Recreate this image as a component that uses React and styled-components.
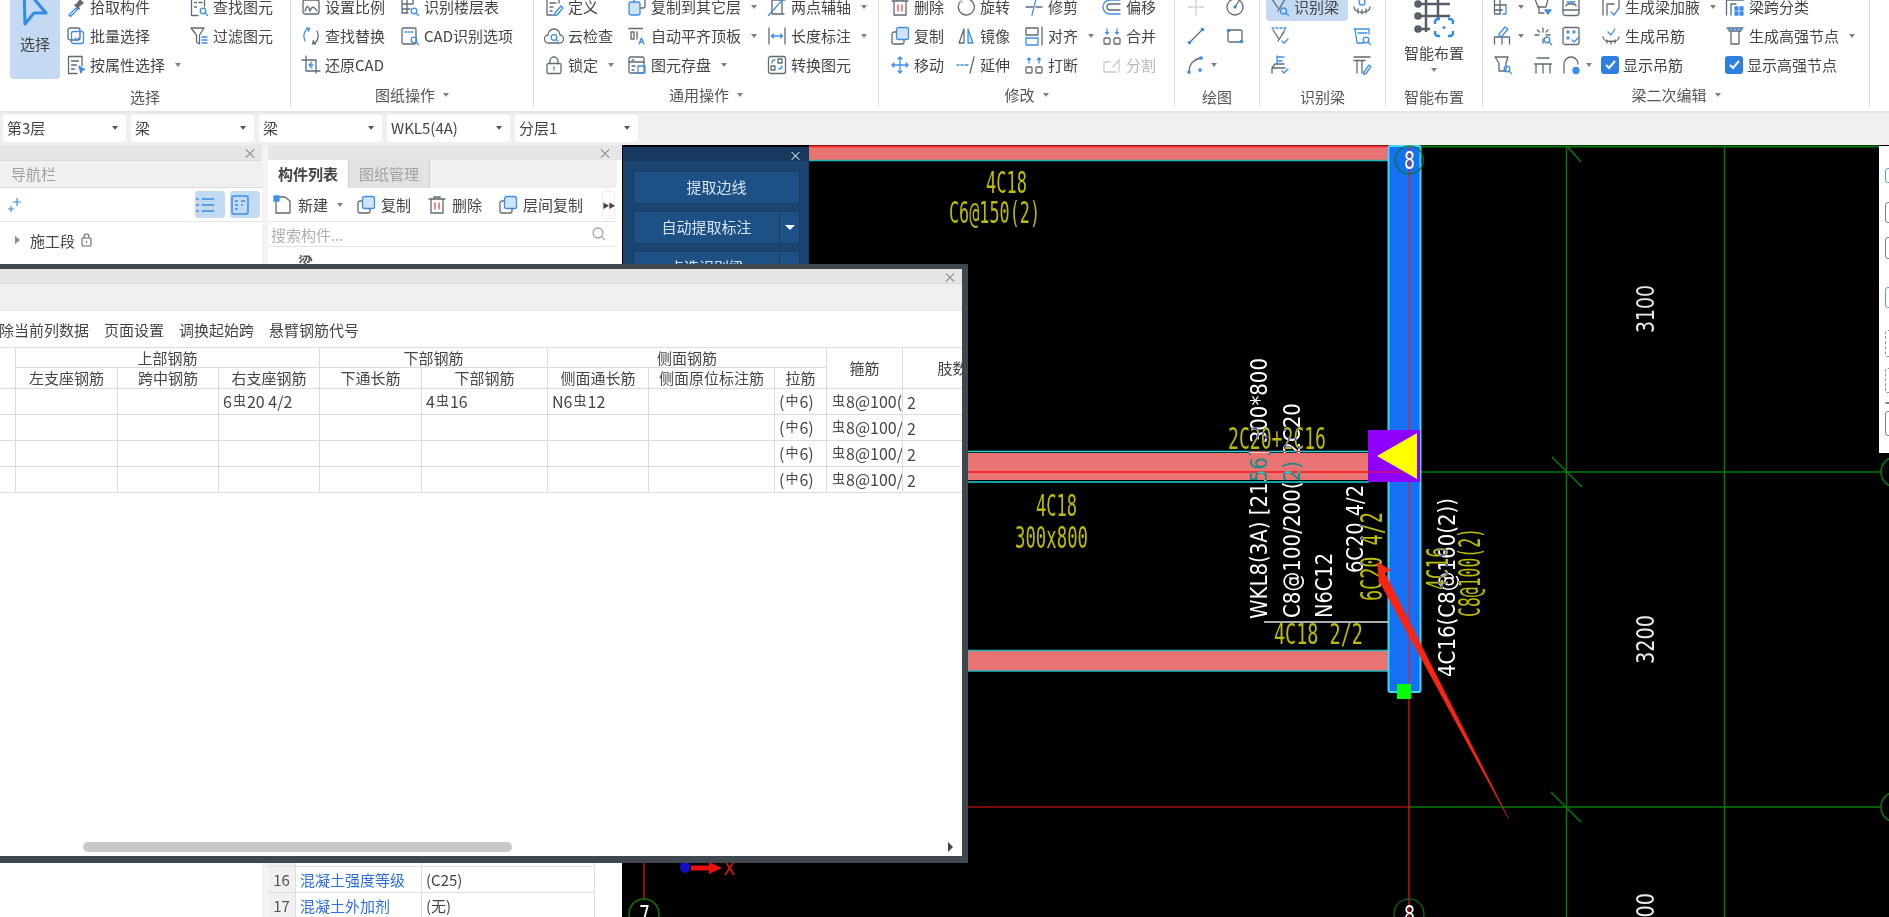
import React from 'react'
import styled, { createGlobalStyle } from 'styled-components'

const UI_FONT = '"Noto Sans CJK SC", "Noto Sans", sans-serif'

const GlobalStyle = createGlobalStyle`
  html, body { margin: 0; padding: 0; background: #f0f0f0; }
  body { font-family: ${UI_FONT}; font-size: 15px; color: #454545; }
  * { box-sizing: border-box; }
`

const Page = styled.div`
  position: relative;
  width: 1889px;
  height: 917px;
  overflow: hidden;
  display: flex;
  flex-direction: column;
`

/* ---------- ribbon ---------- */
const Ribbon = styled.div`
  height: 113px;
  flex: none;
  display: flex;
  background: #fff;
  border-bottom: 2px solid #e4e4e4;
  overflow: hidden;
`
const Group = styled.div`
  width: ${p => p.$w}px;
  flex: none;
  height: 107px;
  display: flex;
  flex-direction: column;
  padding-left: ${p => p.$pad}px;
  border-right: 1px solid #dedede;
`
const GroupBody = styled.div`
  display: flex;
  margin-top: -8px;
  height: 87px;
`
const GroupLabel = styled.div`
  height: 20px;
  margin: ${p => (p.$caret ? 6 : 8)}px 0 0 -${p => p.$pad}px;
  display: flex;
  align-items: center;
  justify-content: center;
  gap: 8px;
  line-height: 20px;
  color: #555;
`
const Column = styled.div`
  width: ${p => p.$w}px;
  flex: none;
`
const Item = styled.div`
  height: 29px;
  display: flex;
  align-items: center;
  gap: 4px;
  white-space: nowrap;
  line-height: 20px;
  color: ${p => (p.$off ? '#b8b8b8' : '#454545')};
  ${p => p.$on && 'background: #c3daf2; border-radius: 4px; margin: 0 4px 0 -4px; padding-left: 4px;'}
`
const Caret = styled.span`
  width: 0;
  height: 0;
  margin-left: ${p => p.$ml ?? 6}px;
  border-left: 3.5px solid transparent;
  border-right: 3.5px solid transparent;
  border-top: 4px solid #808080;
`
const Glyph = styled.svg`
  width: 20px;
  height: 20px;
  flex: none;
  fill: none;
  stroke: #5f6a74;
  stroke-width: 1.3;
  stroke-linecap: round;
  stroke-linejoin: round;
  .b { stroke: #3b8fea; }
  .bf { stroke: #3b8fea; fill: #3b8fea; }
  .lf { stroke: #3b8fea; fill: #cfe3f8; }
  .r { stroke: #e0524a; }
  .d { fill: #5f6a74; stroke: none; }
  .l { stroke: #c9cdd1; }
`
const BigSelect = styled.div`
  width: 50px;
  height: 87px;
  margin-right: 6px;
  background: #c3daf2;
  border-radius: 0 0 4px 4px;
  display: flex;
  flex-direction: column;
  align-items: center;
  line-height: 20px;
  span { margin-top: 8px; }
`
const BigPlace = styled.div`
  width: 97px;
  padding-top: 8px;
  display: flex;
  flex-direction: column;
  align-items: center;
  line-height: 20px;
  gap: 5px;
  span { white-space: nowrap; }
`
const CheckBox = styled.span`
  width: 18px;
  height: 18px;
  flex: none;
  display: flex;
  align-items: center;
  justify-content: center;
  border-radius: 3px;
  background: #2f7fe0;
`

const mag = (
  <>
    <circle className="b" cx="14" cy="14" r="2.8" />
    <path className="b" d="M16 16l2.5 2.5" />
  </>
)
const ICONS = {
  pick: <><path className="b" d="M3 18l7-7 1.5 1.5-7 7z" /><path className="d" d="M10 7l4-5 4 4-5 4 1 2-1 1-5-5 1-1z" /></>,
  batch: <><rect x="2" y="2" width="12" height="12" rx="2" /><rect className="b" x="5.5" y="5.5" width="12" height="12" rx="2" /><path className="b" d="M9 12l2 2 3-3" /></>,
  attr: <><path d="M11 18.5H2.5v-17h13.5v9" /><path d="M5.5 6h7M5.5 10h5M5.5 14h3" /><path className="bf" d="M13 11l5.5 3.5-2.5 1-1 2.5z" /></>,
  find: <><path d="M9 18.5H2.5v-17h13v8" /><path d="M5.5 5.5h2M10 5.5h3M5.5 10h2" />{mag}</>,
  filter: <><path d="M2 2h13l-4.5 7v9l-3-2V9z" /><path className="b" d="M13 11h5M13 14h5M13 17h5" /></>,
  scale: <><rect x="2" y="3" width="16" height="14" rx="2" /><path d="M4 14c2-6 3-6 5 0 1.500-4 3-6 7 0" /></>,
  floor: <><path d="M2 7h11M2 12h8M7 2v14M2 2h11v5M2 2v14h6" />{mag}</>,
  swap: <><path className="b" d="M8 2.500C3 4 1.500 10 4 15" /><path className="b" d="M5.500 2l3 .5-1 3" /><path d="M12 17.500c5-1.500 6.500-7.500 4-12.500" /><path d="M14.500 18l-3-.5 1-3" /></>,
  cadopt: <><rect x="2" y="2" width="14" height="16" rx="1.500" /><path className="b" d="M5 6h2M8.500 6h1M11 6h2" />{mag}</>,
  restore: <><path d="M5 1v15h14M1 5h14v13" /><path className="b" d="M11 7l-3 3 3 3M8 10h4" /></>,
  define: <><path d="M15 6V2H3v16h6" /><path d="M6 6h6M6 10h3M6 14h2" /><path className="b" d="M11 16l6-7 2 2-6 7-3 .5z" /></>,
  cloud: <><path d="M5 17a4 4 0 01-1-8 6 6 0 0112 0 4 4 0 01-1 8z" /><circle className="b" cx="10" cy="11.500" r="2.800" /><path className="b" d="M12 13.500l2 1.500" /></>,
  lock: <><rect x="3" y="8.500" width="14" height="10" rx="1.500" /><path d="M6 8.500V6a4 4 0 018 0v2.500" /><path className="bf" d="M10 12v3" /></>,
  copyto: <><rect x="7" y="0" width="11" height="11" rx="2" /><rect className="lf" x="2" y="5" width="11" height="13" rx="2" /></>,
  level: <><path d="M1.500 2.500h14M4 6v7h3V6zM10 6v7" /><path className="b" d="M12 18l2.500-6 2.500 6M13 16h3" /></>,
  store: <><rect x="2" y="2" width="15" height="16" rx="1.500" /><path d="M2 7h15M5 5h2M5 11h3M5 15h2" /><rect className="b" x="11" y="11" width="7" height="7" /></>,
  axis: <><path d="M5 3h13M5 3v14h12M15 3v14" /><path className="b" d="M1.500 18.500L17 1" /></>,
  dim: <><path d="M2 2v16M18 2v16" /><path className="b" d="M5 10h10M6.500 8L4.500 10l2 2M13.500 8l2 2-2 2" /></>,
  conv: <><rect x="1.500" y="1.500" width="17" height="17" rx="2" /><rect x="4" y="11" width="4" height="4" /><rect x="11" y="4" width="4" height="4" /><path className="b" d="M5 8c0-2 1-3 3-3M15 11c0 2-1 3-3 3" /></>,
  del: <><path d="M2 4h16M7 4V2h6v2M4 4v14h12V4" /><path className="r" d="M8 8v6M12 8v6" /></>,
  rotate: <><path d="M11 2a8 8 0 11-6 2" /><path d="M4 2v3h3" className="l" /></>,
  trim: <><path d="M2 10h7M12 10h6" /><path className="b" d="M12 2L8 18" /></>,
  offset: <><path className="b" d="M18 3H8a7 7 0 000 14h10" /><path d="M18 7H8a3 3 0 000 6h10" /></>,
  copy: <><rect className="lf" x="6.500" y="1.500" width="12" height="12" rx="2" /><path d="M6 6H4a2 2 0 00-2 2v8a2 2 0 002 2h8a2 2 0 002-2v-2" /></>,
  mirror: <><path d="M8 3L3 17h5z" /><path className="lf" d="M12 3l5 14h-5z" /></>,
  align: <><rect x="2" y="2" width="12" height="7" /><rect className="b" x="2" y="12" width="12" height="7" /><path d="M18 1v18" /></>,
  join: <><rect x="2" y="12" width="6" height="6" rx="1" /><rect x="12" y="12" width="6" height="6" rx="1" /><path className="b" d="M5 3v5M15 3v5M3.500 6.500L5 8l1.500-1.500M13.500 6.500L15 8l1.500-1.500" /></>,
  move: <><path className="b" d="M10 2v16M2 10h16M8 4l2-2 2 2M8 16l2 2 2-2M4 8l-2 2 2 2M16 8l2 2-2 2" /></>,
  extend: <><path className="b" d="M1 10h2M5 10h2M9 10h3" /><path d="M18 2l-4 16" /></>,
  cut: <><rect x="2" y="12" width="6" height="6" rx="1" /><rect x="12" y="12" width="6" height="6" rx="1" /><path className="b" d="M5 8V3M15 8V3M3.500 4.500L5 3l1.500 1.500M13.500 4.500L15 3l1.500 1.500" /></>,
  split: <><path className="l" d="M14 17H2V7h6" /><path className="l" d="M17 4v13M11 12l5-6" /></>,
  point: <><path className="l" d="M10 2v5M10 13v5M2 10h5M13 10h5" /><circle className="l" cx="10" cy="10" r="1" /></>,
  arcpt: <><circle cx="10" cy="10" r="8" /><circle className="bf" cx="10" cy="10" r="1" /><path d="M10 10l4-6" /></>,
  line: <><path d="M4 16L16 4" /><circle className="bf" cx="3.500" cy="16.500" r="1.200" /><circle className="bf" cx="16.500" cy="3.500" r="1.200" /></>,
  rect: <><rect x="3" y="4" width="14" height="12" rx="1.500" /><circle className="bf" cx="3.500" cy="4.500" r="1.200" /><circle className="bf" cx="16.500" cy="15.500" r="1.200" /></>,
  arc: <><path d="M3 17C3 9 8 4 15 3" /><circle className="bf" cx="3" cy="17" r="1.200" /><circle className="bf" cx="15" cy="3" r="1.200" /><circle className="bf" cx="14" cy="15" r="1.200" /></>,
  beam: <><path d="M2 2l6 9M15 2L8 14" /><circle className="b" cx="13.500" cy="14" r="3" /><path className="b" d="M16 16l2.500 2.500" /></>,
  hang: <><path d="M2 10c0 7 16 7 16 0" /><path d="M6 12v4M10 13v4M14 12v4" /><circle className="b" cx="10" cy="5" r="3" /></>,
  dash: <><path className="b" strokeDasharray="2 2" d="M2 2h14l-4 6" /><path d="M3 4l6 9M14 6l-6 9" /><path className="b" d="M12 15l2 2 4-4" /></>,
  viewq: <><path className="b" d="M2 3h15v5M3 3l2 14h7" /><path className="b" d="M6 7h9" />{mag}</>,
  stairs: <><path d="M2 18v-5h13M2 13l3-4h9" /><path className="b" d="M7 1v8M7 2h7M7 6h5M12 16l2 2 4-4" /></>,
  tpen: <><path d="M2 2h16M2 5.500h11M5 5.500V18M10 5.500V18" /><path className="b" d="M12 17l5-7 2 1.500-5 7-2.500.5z" /></>,
  grid: <><path d="M1.500 8h12M1.500 13h8M7 2v15M1.500 2h12M1.500 2v15h6" /><path className="b" d="M13 9v8h-3" /></>,
  cone: <><path d="M2 2h13l-2 8H5z" /><path d="M6 10v6h5" /><path className="bf" d="M12 13h6l-3 4z" /></>,
  face: <><rect x="2" y="1.500" width="16" height="17" rx="2.500" /><path d="M2 13h16M5 9c0-3 10-3 10 0" /><path className="b" d="M6 5h8" /></>,
  penb: <><path d="M1.500 18v-7h15v7M9 11v7" /><path className="b" d="M6 8l6-7 3 2-6 7-3 .5z" /></>,
  spark: <><path d="M10 2v4M10 13v4M2 9h4M13 9h4M4.500 4l2 2M15 4l-2 2" />{mag}</>,
  dots: <><rect x="2" y="1.500" width="16" height="17" rx="2" /><circle className="b" cx="7" cy="6" r="1" /><circle className="b" cx="13" cy="6" r="1" /><circle className="b" cx="7" cy="12" r="1" /><path className="b" d="M11 14l2 2 4-4" /></>,
  funnelq: <><path d="M2 2h13l-2 6v8H6V8z" />{mag}</>,
  hat: <><path d="M4 3h12M1.500 9h17M3 18V9M17 18V9M10 18V9" /></>,
  arch: <><path d="M3 18V9a7 7 0 0114 0" /><circle className="bf" cx="15" cy="15.500" r="3" /></>,
  haunch: <><path d="M2 18V2h16v8M6 18V7h7" /><path className="b" d="M10 15l3 3 5-7" /></>,
  gen: <><path d="M2 11c0 6 16 6 16 0" /><path d="M6 14v3M10 15v3M14 14v3" /><path className="b" d="M7 6l3 3 4-6" /></>,
  span: <><path d="M1.500 3h17M1.500 3v15M6 7h5M6 7v11" /><path className="bf" d="M10 10h3v3h-3zM15 10h3v3h-3zM10 15h3v3h-3zM15 15h3v3h-3z" /></>,
  node: <><path d="M2 2h16M4 5h12M6 5v13h8V5" /><path className="b" strokeDasharray="2 2" d="M3 3.500h14" /></>,
}

const Ico = ({ name }) => <Glyph viewBox="0 0 20 20">{ICONS[name]}</Glyph>

const RibbonItem = ({ icon, label, caret, off, on, check }) => (
  <Item $off={off} $on={on}>
    {check ? (
      <CheckBox>
        <svg width="13" height="13" viewBox="0 0 13 13" fill="none" stroke="#fff" strokeWidth="2"><path d="M2 7l3 3 6-7" /></svg>
      </CheckBox>
    ) : icon ? <Ico name={icon} /> : null}
    {label && <span>{label}</span>}
    {caret && <Caret $ml={label ? 6 : 1} />}
  </Item>
)

const SelectArrow = () => (
  <svg width="28" height="34" viewBox="0 0 28 34" fill="none" stroke="#2f8de4" strokeWidth="3" strokeLinejoin="round">
    <path d="M3 -5L25 21H13L4 32Z" />
  </svg>
)
const PlaceIcon = () => (
  <svg width="40" height="38" viewBox="0 0 40 38" fill="none" stroke="#555d66" strokeWidth="2.500">
    <path d="M12 -2V32M24 -2V20M3 4H36M3 16H36M3 29H16" />
    <circle cx="4" cy="4" r="2.500" />
    <circle cx="4" cy="16" r="2.500" />
    <circle cx="4" cy="29" r="2.500" />
    <path stroke="#2f8de4" d="M21 24v-2a3 3 0 013-3h2M34 19h2a3 3 0 013 3v2M39 31v2a3 3 0 01-3 3h-2M26 36h-2a3 3 0 01-3-3v-2" />
    <circle cx="30" cy="27.500" r="1.500" fill="#2f8de4" stroke="none" />
  </svg>
)

const RIBBON = [
  { w: 291, pad: 10, label: '选择', big: true, cols: [
    { w: 123, items: [{ icon: 'pick', label: '拾取构件' }, { icon: 'batch', label: '批量选择' }, { icon: 'attr', label: '按属性选择', caret: true }] },
    { w: 90, items: [{ icon: 'find', label: '查找图元' }, { icon: 'filter', label: '过滤图元' }] },
  ] },
  { w: 243, pad: 10, label: '图纸操作', caret: true, cols: [
    { w: 99, items: [{ icon: 'scale', label: '设置比例' }, { icon: 'swap', label: '查找替换' }, { icon: 'restore', label: '还原CAD' }] },
    { w: 120, items: [{ icon: 'floor', label: '识别楼层表' }, { icon: 'cadopt', label: 'CAD识别选项' }] },
  ] },
  { w: 345, pad: 10, label: '通用操作', caret: true, cols: [
    { w: 83, items: [{ icon: 'define', label: '定义' }, { icon: 'cloud', label: '云检查' }, { icon: 'lock', label: '锁定', caret: true }] },
    { w: 140, items: [{ icon: 'copyto', label: '复制到其它层', caret: true }, { icon: 'level', label: '自动平齐顶板', caret: true }, { icon: 'store', label: '图元存盘', caret: true }] },
    { w: 110, items: [{ icon: 'axis', label: '两点辅轴', caret: true }, { icon: 'dim', label: '长度标注', caret: true }, { icon: 'conv', label: '转换图元' }] },
  ] },
  { w: 296, pad: 11, label: '修改', caret: true, cols: [
    { w: 66, items: [{ icon: 'del', label: '删除' }, { icon: 'copy', label: '复制' }, { icon: 'move', label: '移动' }] },
    { w: 68, items: [{ icon: 'rotate', label: '旋转' }, { icon: 'mirror', label: '镜像' }, { icon: 'extend', label: '延伸' }] },
    { w: 78, items: [{ icon: 'trim', label: '修剪' }, { icon: 'align', label: '对齐', caret: true }, { icon: 'cut', label: '打断' }] },
    { w: 70, items: [{ icon: 'offset', label: '偏移' }, { icon: 'join', label: '合并' }, { icon: 'split', label: '分割', off: true }] },
  ] },
  { w: 85, pad: 11, label: '绘图', cols: [
    { w: 39, items: [{ icon: 'point' }, { icon: 'line' }, { icon: 'arc', caret: true }] },
    { w: 30, items: [{ icon: 'arcpt' }, { icon: 'rect' }] },
  ] },
  { w: 126, pad: 10, label: '识别梁', cols: [
    { w: 82, items: [{ icon: 'beam', label: '识别梁', on: true }, { icon: 'dash' }, { icon: 'stairs' }] },
    { w: 24, items: [{ icon: 'hang' }, { icon: 'viewq' }, { icon: 'tpen' }] },
  ] },
  { w: 97, pad: 0, label: '智能布置', place: true, cols: [] },
  { w: 387, pad: 10, label: '梁二次编辑', caret: true, cols: [
    { w: 40, items: [{ icon: 'grid', caret: true }, { icon: 'penb', caret: true }, { icon: 'funnelq' }] },
    { w: 28, items: [{ icon: 'cone' }, { icon: 'spark' }, { icon: 'hat' }] },
    { w: 40, items: [{ icon: 'face' }, { icon: 'dots' }, { icon: 'arch', caret: true }] },
    { w: 124, items: [{ icon: 'haunch', label: '生成梁加腋', caret: true }, { icon: 'gen', label: '生成吊筋' }, { check: true, label: '显示吊筋' }] },
    { w: 140, items: [{ icon: 'span', label: '梁跨分类' }, { icon: 'node', label: '生成高强节点', caret: true }, { check: true, label: '显示高强节点' }] },
  ] },
]

const RibbonBar = () => (
  <Ribbon>
    {RIBBON.map(g => (
      <Group key={g.label} $w={g.w} $pad={g.pad}>
        <GroupBody>
          {g.big && <BigSelect><SelectArrow /><span>选择</span></BigSelect>}
          {g.place && (
            <BigPlace>
              <PlaceIcon />
              <span>智能布置</span>
              <Caret $ml={0} />
            </BigPlace>
          )}
          {g.cols.map((c, i) => (
            <Column key={i} $w={c.w}>
              {c.items.map((it, j) => <RibbonItem key={j} {...it} />)}
            </Column>
          ))}
        </GroupBody>
        <GroupLabel $pad={g.pad} $caret={g.caret}>
          {g.label}
          {g.caret && <Caret $ml={0} />}
        </GroupLabel>
      </Group>
    ))}
  </Ribbon>
)

/* ---------- selector toolbar ---------- */
const SelectorBar = styled.div`
  height: 32px;
  flex: none;
  display: flex;
  align-items: center;
  gap: 5px;
  padding: 0 0 2px 3px;
  background: #f0f0f0;
`
const Selector = styled.div`
  width: 123px;
  height: 27px;
  padding: 0 8px 0 4px;
  display: flex;
  align-items: center;
  justify-content: space-between;
  background: #fff;
  border-radius: 3px;
  line-height: 20px;
  i {
    width: 0;
    height: 0;
    border-left: 3.500px solid transparent;
    border-right: 3.500px solid transparent;
    border-top: 4px solid #555;
  }
`

/* ---------- side panels ---------- */
const Workspace = styled.div`
  flex: 1;
  min-height: 0;
  display: flex;
  background: #f3f3f3;
`
const Panel = styled.div`
  width: ${p => p.$w}px;
  flex: none;
  display: flex;
  flex-direction: column;
  margin-right: ${p => p.$mr || 0}px;
  background: #fff;
`
const PanelHead = styled.div`
  height: 15px;
  flex: none;
  display: flex;
  justify-content: flex-end;
  align-items: center;
  padding-right: ${p => p.$pr || 5}px;
  background: #e6e6e6;
  color: #8a8a8a;
  font-size: 14px;
  line-height: 15px;
`
const NavTitle = styled.div`
  height: 28px;
  flex: none;
  padding-left: 11px;
  line-height: 26px;
  background: #f0f0f0;
  border-top: 1px solid #dcdcdc;
  border-bottom: 1px solid #dcdcdc;
  color: #a0a0a0;
`
const NavTools = styled.div`
  height: 34px;
  flex: none;
  display: flex;
  align-items: center;
  padding: 0 2px 0 8px;
  gap: 5px;
  border-bottom: 1px solid #e4e4e4;
  svg:first-child { margin-right: auto; }
`
const NavBtn = styled.span`
  width: 30px;
  height: 27px;
  display: flex;
  align-items: center;
  justify-content: center;
  background: #c3daf2;
  border-radius: 3px;
`
const TreeRow = styled.div`
  height: 36px;
  flex: none;
  display: flex;
  align-items: center;
  padding-left: 15px;
  gap: 10px;
  i {
    width: 0;
    height: 0;
    border-top: 4px solid transparent;
    border-bottom: 4px solid transparent;
    border-left: 5px solid #888;
  }
  svg { margin-left: -4px; }
`
const Tabs = styled.div`
  height: 28px;
  flex: none;
  display: flex;
  background: #f0f0f0;
  margin-right: 5px;
`
const Tab = styled.div`
  width: 81px;
  text-align: center;
  line-height: 28px;
  font-weight: ${p => (p.$on ? 700 : 400)};
  color: ${p => (p.$on ? '#444' : '#a2a2a2')};
  background: ${p => (p.$on ? '#fff' : '#e2e2e2')};
  border-right: 1px solid #cfcfcf;
`
const ListTools = styled.div`
  height: 34px;
  flex: none;
  display: flex;
  align-items: center;
  padding-left: 5px;
  margin-right: 5px;
  border-bottom: 1px solid #e4e4e4;
`
const ListTool = styled.div`
  display: flex;
  align-items: center;
  gap: 5px;
  margin-right: ${p => p.$mr}px;
  white-space: nowrap;
`
const MoreBtn = styled.span`
  margin-left: auto;
  margin-right: 2px;
  width: 13px;
  height: 28px;
  display: flex;
  align-items: center;
  justify-content: center;
  font-size: 7px;
  letter-spacing: -1px;
  color: #444;
  border: 1px solid #eee;
  border-radius: 3px;
`
const SearchRow = styled.div`
  height: 25px;
  flex: none;
  display: flex;
  align-items: center;
  justify-content: space-between;
  padding: 0 11px 0 3px;
  margin-right: 5px;
  color: #b0b0b0;
  border-bottom: 1px solid #e4e4e4;
`
const ListEntry = styled.div`
  padding: 5px 0 0 30px;
  line-height: 20px;
  font-weight: 700;
  color: #555;
`
const PropTable = styled.div`
  margin-top: auto;
  margin-bottom: -2px;
`
const PropRow = styled.div`
  display: grid;
  grid-template-columns: 28px 126px 173px;
  height: 26px;
  line-height: 25px;
  & > * {
    border: 1px solid #dedede;
    border-width: 0 1px 1px 0;
    padding-left: 4px;
    white-space: nowrap;
  }
`
const PropNo = styled.span`
  background: #f0f0f0;
  text-align: center;
  padding-left: 0 !important;
  color: #555;
`
const PropName = styled.span`
  color: #2c6fe0;
`

/* ---------- CAD canvas ---------- */
const Canvas = styled.div`
  flex: 1;
  position: relative;
  background: #000;
  overflow: hidden;
`
const Drawing = styled.svg`
  display: block;
  width: 1267px;
  height: 772px;
`
const CadText = styled.text`
  font-family: ${p => (p.$sans ? '"DejaVu Sans", sans-serif' : '"DejaVu Sans Mono", monospace')};
  fill: ${p => p.$fill};
  mix-blend-mode: ${p => (p.$xor ? 'difference' : 'normal')};
`
const ExtractPanel = styled.div`
  position: absolute;
  left: 1px;
  top: 2px;
  width: 186px;
  height: 400px;
  padding: 0 8px 0 10px;
  background: #1b4570;
  border-right: 1px solid #16385c;
`
const ExtractHead = styled.div`
  height: 14px;
  margin: 0 -8px 10px -10px;
  padding-right: 6px;
  display: flex;
  justify-content: flex-end;
  align-items: center;
  background: #17395f;
  color: #cfe0ee;
  font-size: 13px;
`
const ExtractBtn = styled.div`
  height: 33px;
  margin-bottom: 7px;
  display: flex;
  align-items: stretch;
  background: #1d5186;
  border: 1px solid #163e68;
  color: #d6e4f0;
  line-height: 30px;
  span { flex: 1; text-align: center; }
  i {
    width: 20px;
    border-left: 1px solid #163e68;
    display: flex;
    align-items: center;
    justify-content: center;
  }
  i::after {
    content: '';
    border-left: 5px solid transparent;
    border-right: 5px solid transparent;
    border-top: 5px solid #fff;
  }
`
const SideStrip = styled.div`
  position: absolute;
  right: 0;
  top: 1px;
  width: 10px;
  height: 307px;
  padding-left: 6px;
  background: #fff;
  overflow: hidden;
`
const StripMark = styled.div`
  width: 12px;
  height: ${p => p.$h}px;
  margin-top: ${p => p.$mt}px;
  border: 1.500px ${p => (p.$dash ? 'dashed' : 'solid')} ${p => p.$c};
  border-radius: 3px;
`
const STRIP = [
  { mt: 22, h: 15, c: '#5b9ae6' }, { mt: 19, h: 21, c: '#808080' }, { mt: 14, h: 22, c: '#808080' },
  { mt: 28, h: 21, c: '#5b9ae6' }, { mt: 22, h: 27, c: '#909090', dash: true },
  { mt: 11, h: 25, c: '#909090', dash: true }, { mt: 9, h: 1, c: '#808080' }, { mt: 7, h: 25, c: '#808080' },
]

// text standing on end, read from the bottom up
const Up = ({ x, y, len, size, fill, xor, sans, children }) => (
  <CadText x={x} y={y} fontSize={size} textLength={len} lengthAdjust="spacingAndGlyphs" $fill={fill} $xor={xor} $sans={sans} transform={`rotate(-90 ${x} ${y})`}>{children}</CadText>
)
const Flat = ({ x, y, len, size, fill, sans, children }) => (
  <CadText x={x} y={y} fontSize={size} textLength={len} lengthAdjust="spacingAndGlyphs" $fill={fill} $sans={sans}>{children}</CadText>
)
const YEL = '#bcbc00'
const WHT = '#ffffff'
const GRN = '#0a780a'
const RED = '#f01818'
const CYN = '#22b8b8'

const CadDrawing = () => (
  <Drawing viewBox="622 145 1267 772">
    <g fill="none" stroke={GRN} strokeWidth="1.500">
      <path d="M1390 146.500H1879" strokeWidth="2" />
      <path d="M1566.500 146V917M1724.500 146V917" />
      <path d="M1421 472H1881M1409 807H1881" />
      <path d="M1567 146L1581 162M1552 457L1582 487M1551 792L1581 822" />
      <circle cx="1896" cy="472" r="15" />
      <circle cx="1896" cy="807" r="15" />
      <circle cx="644" cy="914" r="15" />
    </g>
    <path d="M968 807H1409" stroke={RED} strokeWidth="1.200" />
    <path d="M644 860V899" stroke={RED} strokeWidth="1.200" />

    {/* beams */}
    <rect x="809" y="146" width="580" height="14" fill="#e97272" />
    <path d="M809 146.500H1390" stroke="#ff2c2c" strokeWidth="2" />
    <path d="M809 160.500H1389" stroke={CYN} strokeWidth="1.500" />
    <rect x="968" y="453" width="401" height="27" fill="#e97272" />
    <path d="M968 451.500H1369M968 482H1369" stroke="#18d8d8" strokeWidth="1.500" />
    <path d="M968 472H1369" stroke={RED} strokeWidth="1.500" />
    <rect x="968" y="651" width="420" height="20" fill="#e97272" />
    <path d="M968 650.500H1388M968 671H1388" stroke={CYN} strokeWidth="1.500" />

    {/* column */}
    <rect x="1388.500" y="146" width="32" height="546" rx="2" fill="#1570f4" stroke="#42d4f4" strokeWidth="2" />
    <path d="M1409 146V917" stroke={RED} strokeWidth="1.200" />
    <rect x="1368" y="430" width="52" height="52" fill="#8f00ff" />
    <path d="M1368 472H1420" stroke={RED} strokeWidth="1.200" />
    <path d="M1377 456L1417 433V479Z" fill="#ffff00" />
    <rect x="1397" y="684" width="14" height="15" fill="#00ff00" />
    <path d="M1264 622H1388" stroke="#e6e6e6" strokeWidth="1.500" />

    {/* grid bubbles */}
    <circle cx="1409.500" cy="160" r="14" fill="none" stroke={GRN} strokeWidth="1.200" />
    <circle cx="1409" cy="914" r="15" fill="none" stroke={GRN} strokeWidth="1.200" />
    <Flat x="1404" y="169" len="11" size="24" fill={WHT} sans>8</Flat>
    <Flat x="1404" y="923" len="11" size="24" fill={WHT} sans>8</Flat>
    <Flat x="639" y="923" len="11" size="24" fill={WHT} sans>7</Flat>

    {/* origin marker */}
    <ellipse cx="685" cy="867" rx="5" ry="6" fill="#1010c8" />
    <path d="M691 865.500H709V862L722 868L709 874V870.500H691Z" fill="#e81010" />
    <Flat x="724" y="875" len="11" size="18" fill="#e81010">X</Flat>

    {/* yellow rebar notes */}
    <Flat x="986" y="193" len="41" size="30" fill={YEL}>4C18</Flat>
    <Flat x="949" y="223" len="91" size="30" fill={YEL}>C6@150(2)</Flat>
    <Flat x="1036" y="516" len="41" size="30" fill={YEL}>4C18</Flat>
    <Flat x="1015" y="548" len="73" size="30" fill={YEL}>300x800</Flat>
    <Flat x="1228" y="449" len="98" size="30" fill={YEL}>2C20+2C16</Flat>
    <Flat x="1274" y="644" len="89" size="29" fill={YEL}>4C18 2/2</Flat>
    <Up x={1382} y={601} len={89} size={30} fill={YEL}>6C20 4/2</Up>
    <Up x={1448} y={590} len={43} size={30} fill={YEL}>4C16</Up>
    <Up x={1480} y={617} len={89} size={30} fill={YEL}>C8@100(2)</Up>

    {/* white notes, drawn XOR over whatever is below */}
    <Up x={1267} y={619} len={261} size={23} fill={WHT} xor sans>WKL8(3A) [2156] 300*800</Up>
    <Up x={1300} y={618} len={215} size={23} fill={WHT} xor sans>C8@100/200(2) 2C20</Up>
    <Up x={1332} y={618} len={65} size={23} fill={WHT} xor sans>N6C12</Up>
    <Up x={1363} y={573} len={88} size={23} fill={WHT} xor sans>6C20 4/2</Up>
    <Up x={1455} y={677} len={179} size={23} fill={WHT} xor sans>4C16(C8@160(2))</Up>
    <Up x={1654} y={333} len={48} size={25} fill="#e8e8e8" sans>3100</Up>
    <Up x={1654} y={664} len={49} size={25} fill="#e8e8e8" sans>3200</Up>
    <Up x={1654} y={942} len={49} size={25} fill="#e8e8e8" sans>3000</Up>

    {/* red callout arrow */}
    <path d="M1377 562L1391 570L1385 573L1509 819L1508.500 819.300L1379 581Z" fill="#fa2412" />
  </Drawing>
)

/* ---------- floating rebar table ---------- */
const Dialog = styled.div`
  position: absolute;
  left: 0;
  top: 264px;
  width: 968px;
  height: 599px;
  display: flex;
  flex-direction: column;
  background: #fff;
  border: solid #3f474f;
  border-width: 5px 6px 7px 0;
  overflow: hidden;
`
const DialogHead = styled(PanelHead)`
  padding-right: 5px;
  flex: none;
  border-bottom: 1px solid #d8d8d8;
`
const DialogTools = styled.div`
  height: 27px;
  flex: none;
  background: #f0f0f0;
  border-bottom: 1px solid #e6e6e6;
`
const MenuRow = styled.div`
  height: 36px;
  flex: none;
  display: flex;
  align-items: center;
  gap: 15px;
  margin-left: -16px;
  white-space: nowrap;
`
const TableWrap = styled.div`
  flex: 1;
  overflow: hidden;
`
const Sheet = styled.table`
  table-layout: fixed;
  width: 1027px;
  margin-left: -25px;
  border-collapse: collapse;
  th, td {
    border: 1px solid #dcdcdc;
    padding: 0;
    overflow: hidden;
    white-space: nowrap;
  }
  th {
    font-weight: 400;
    text-align: center;
    line-height: 18px;
  }
  td {
    height: 26px;
    padding-left: 4px;
    line-height: 22px;
    font-size: 16px;
  }
`
const Rebar = styled.span`
  font-size: 13px;
  position: relative;
  top: -3px;
  margin: 0 1px;
`
const ScrollRow = styled.div`
  height: 14px;
  flex: none;
  position: relative;
`
const ScrollThumb = styled.div`
  margin-left: 83px;
  width: 429px;
  height: 10px;
  border-radius: 5px;
  background: #c8c8c8;
`
const ScrollArrow = styled.i`
  position: absolute;
  left: 948px;
  top: 0;
  border-top: 5px solid transparent;
  border-bottom: 5px solid transparent;
  border-left: 5px solid #444;
`

const COLS = [40, 102, 101, 101, 102, 126, 101, 126, 52, 76, 100]
const ROWS = [
  { right: <>6<Rebar>虫</Rebar>20 4/2</>, low: <>4<Rebar>虫</Rebar>16</>, side: <>N6<Rebar>虫</Rebar>12</>, stir: <><Rebar>虫</Rebar>8@100(</> },
  { stir: <><Rebar>虫</Rebar>8@100/</> },
  { stir: <><Rebar>虫</Rebar>8@100/</> },
  { stir: <><Rebar>虫</Rebar>8@100/</> },
]

const RebarDialog = () => (
  <Dialog>
    <DialogHead>×</DialogHead>
    <DialogTools />
    <MenuRow>
      <span>删除当前列数据</span>
      <span>页面设置</span>
      <span>调换起始跨</span>
      <span>悬臂钢筋代号</span>
    </MenuRow>
    <TableWrap>
      <Sheet>
        <colgroup>{COLS.map((w, i) => <col key={i} style={{ width: w }} />)}</colgroup>
        <thead>
          <tr style={{ height: 20 }}>
            <th rowSpan="2" />
            <th colSpan="3">上部钢筋</th>
            <th colSpan="2">下部钢筋</th>
            <th colSpan="3">侧面钢筋</th>
            <th rowSpan="2">箍筋</th>
            <th rowSpan="2">肢数</th>
          </tr>
          <tr style={{ height: 21 }}>
            <th>左支座钢筋</th>
            <th>跨中钢筋</th>
            <th>右支座钢筋</th>
            <th>下通长筋</th>
            <th>下部钢筋</th>
            <th>侧面通长筋</th>
            <th>侧面原位标注筋</th>
            <th>拉筋</th>
          </tr>
        </thead>
        <tbody>
          {ROWS.map((r, i) => (
            <tr key={i}>
              <td />
              <td />
              <td />
              <td>{r.right}</td>
              <td />
              <td>{r.low}</td>
              <td>{r.side}</td>
              <td />
              <td>(<Rebar>中</Rebar>6)</td>
              <td>{r.stir}</td>
              <td>2</td>
            </tr>
          ))}
        </tbody>
      </Sheet>
    </TableWrap>
    <ScrollRow>
      <ScrollThumb />
      <ScrollArrow />
    </ScrollRow>
  </Dialog>
)

export default function App() {
  return (
    <Page>
      <GlobalStyle />
      <RibbonBar />
      <SelectorBar>
        {['第3层', '梁', '梁', 'WKL5(4A)', '分层1'].map((t, i) => (
          <Selector key={i}><span>{t}</span><i /></Selector>
        ))}
      </SelectorBar>
      <Workspace>
        <Panel $w={262} $mr={6}>
          <PanelHead>×</PanelHead>
          <NavTitle>导航栏</NavTitle>
          <NavTools>
            <svg width="14" height="16" viewBox="0 0 14 16" fill="none" stroke="#3b8fea" strokeWidth="1.200"><path d="M9 1v8M5 5h8M3 9v6M0 12h6" /></svg>
            <NavBtn>
              <svg width="20" height="18" viewBox="0 0 20 18" fill="none" stroke="#3b8fea" strokeWidth="1.500"><path d="M7 3h12M7 9h12M7 15h12M1 3h3M1 9h3M1 15h3" /></svg>
            </NavBtn>
            <NavBtn>
              <svg width="20" height="20" viewBox="0 0 20 20" fill="none" stroke="#3b8fea" strokeWidth="1.500"><rect x="2" y="1" width="16" height="18" rx="2" /><path d="M5 6h3M11 6h4M5 10h3M11 10h2M5 14h3" /></svg>
            </NavBtn>
          </NavTools>
          <TreeRow>
            <i />
            <span>施工段</span>
            <svg width="11" height="14" viewBox="0 0 11 14" fill="none" stroke="#666" strokeWidth="1.100"><rect x="1" y="5" width="9" height="8" rx="1" /><path d="M3 5V3.500a2.500 2.500 0 015 0V5M5.500 8v2" /></svg>
          </TreeRow>
        </Panel>
        <Panel $w={354}>
          <PanelHead $pr={10}>×</PanelHead>
          <Tabs>
            <Tab $on>构件列表</Tab>
            <Tab>图纸管理</Tab>
          </Tabs>
          <ListTools>
            <ListTool $mr={13}>
              <Glyph viewBox="0 0 20 20"><path d="M3 6v12h14V6l-5-4H6" /><rect className="bf" x="1" y="1" width="5" height="5" /></Glyph>
              <span>新建</span>
              <Caret $ml={4} />
            </ListTool>
            <ListTool $mr={16}><Ico name="copy" /><span>复制</span></ListTool>
            <ListTool $mr={16}><Ico name="del" /><span>删除</span></ListTool>
            <ListTool $mr={0}><Ico name="copy" /><span>层间复制</span></ListTool>
            <MoreBtn>▶▶</MoreBtn>
          </ListTools>
          <SearchRow>
            <span>搜索构件...</span>
            <svg width="14" height="14" viewBox="0 0 14 14" fill="none" stroke="#a8a8a8" strokeWidth="1.300"><circle cx="6" cy="6" r="5" /><path d="M10 10l3 3" /></svg>
          </SearchRow>
          <ListEntry>梁</ListEntry>
          <PropTable>
            <PropRow><PropNo>15</PropNo><PropName>混凝土类型</PropName><span /></PropRow>
            <PropRow><PropNo>16</PropNo><PropName>混凝土强度等级</PropName><span>(C25)</span></PropRow>
            <PropRow><PropNo>17</PropNo><PropName>混凝土外加剂</PropName><span>(无)</span></PropRow>
          </PropTable>
        </Panel>
        <Canvas>
          <CadDrawing />
          <ExtractPanel>
            <ExtractHead>×</ExtractHead>
            <ExtractBtn><span>提取边线</span></ExtractBtn>
            <ExtractBtn><span>自动提取标注</span><i /></ExtractBtn>
            <ExtractBtn><span>点选识别梁</span><i /></ExtractBtn>
          </ExtractPanel>
          <SideStrip>
            {STRIP.map((m, i) => <StripMark key={i} $h={m.h} $mt={m.mt} $c={m.c} $dash={m.dash} />)}
          </SideStrip>
        </Canvas>
      </Workspace>
      <RebarDialog />
    </Page>
  )
}
